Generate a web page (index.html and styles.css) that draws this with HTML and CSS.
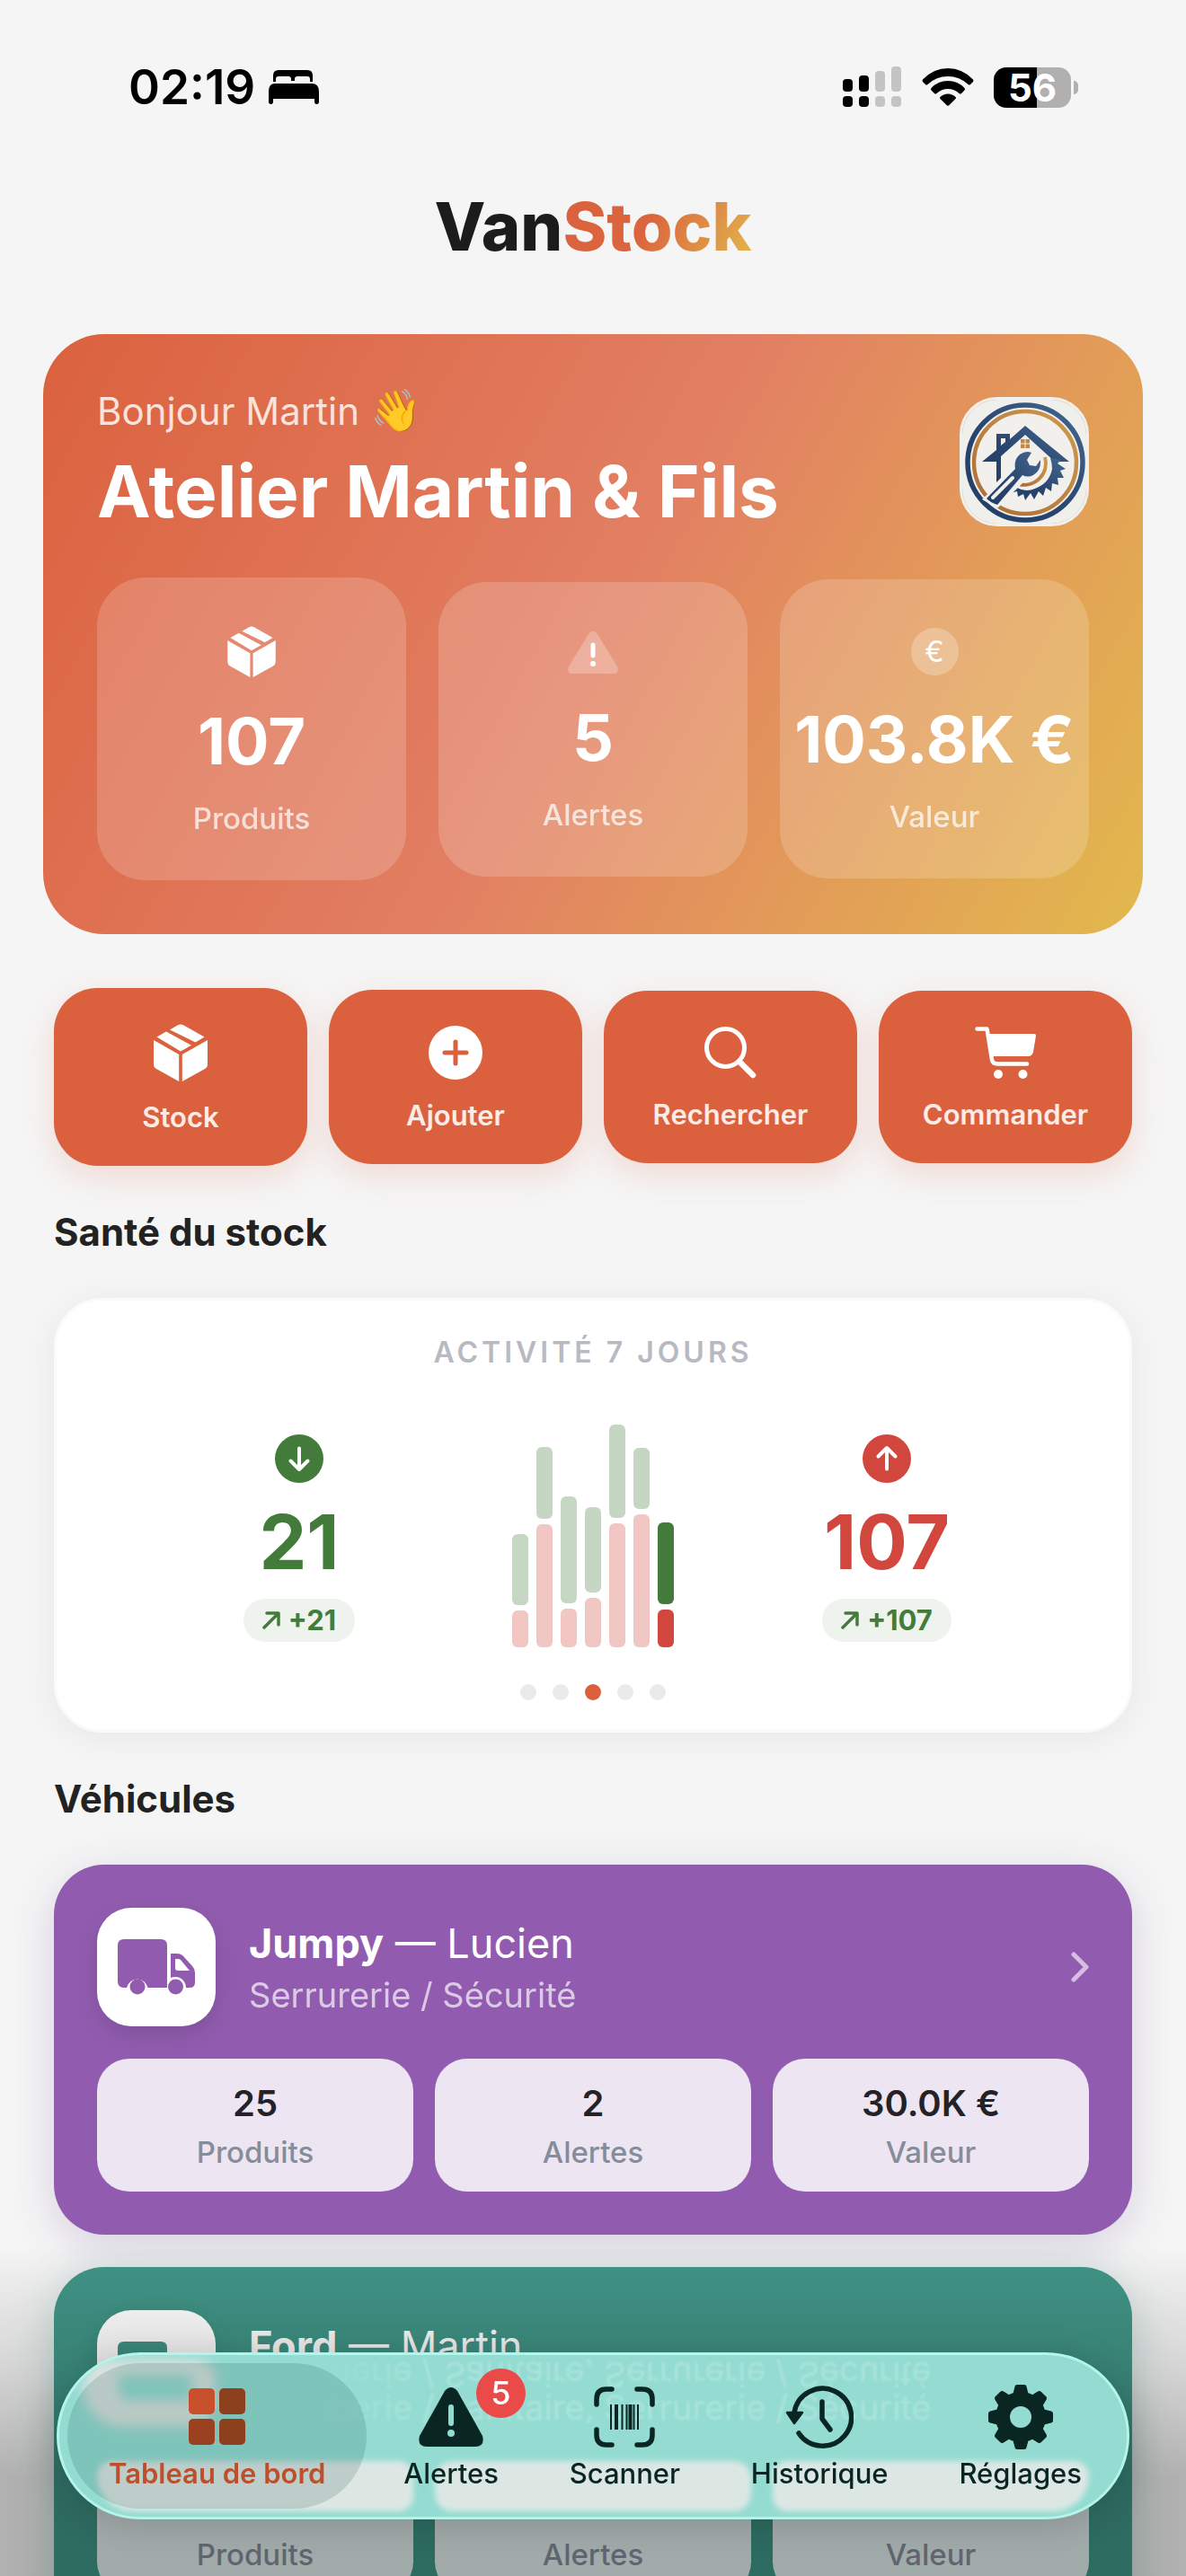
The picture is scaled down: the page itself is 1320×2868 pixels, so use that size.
FILE: index.html
```html
<!DOCTYPE html>
<html lang="fr">
<head>
  <meta charset="UTF-8">
  <meta name="viewport" content="width=device-width, initial-scale=1.0">
  <title>VanStock</title>
  <link rel="stylesheet" href="styles.css">
</head>
<body>
  <!-- Icônes partagées -->
  <svg class="sprite" aria-hidden="true">
    <symbol id="icon-box" viewBox="0 0 60 64">
      <path d="M18 6.500 27 1.300Q30 -.3 33 1.300L56.500 14.500 46.500 20.500Z"/>
      <path d="M3.500 14.500 14 8.600 42 23.800 30 30.600Z"/>
      <path d="M0 18 28.200 34V64L3 50Q0 48.300 0 45Z"/>
      <path d="M60 18 31.800 34V64L57 50Q60 48.300 60 45Z"/>
    </symbol>
    <symbol id="icon-truck" viewBox="0 0 86 62">
      <path d="M7 0H48Q55 0 55 7V54H33.500A12 12 0 0 0 10 54H7Q0 54 0 47V7Q0 0 7 0Z"/>
      <path fill-rule="evenodd" d="M59 16H66Q71 16 74 20L83 30Q86 33 86 37V48Q86 54 80 54H76A12 12 0 0 0 59 43ZM64 22V32Q64 35 67 35H80L70 23Q69 22 67 22Z"/>
      <circle cx="22" cy="53" r="8.500"/>
      <circle cx="64.500" cy="53" r="8.500"/>
    </symbol>
  </svg>

  <!-- Barre d'état -->
  <div class="status-bar">
    <div class="status-left">
      <span>02:19</span>
      <svg width="56" height="38" viewBox="0 0 56 38" aria-hidden="true">
        <path d="M5 13V6Q5 0 11 0H43Q49 0 49 6V13H46V10Q46 7 43 7H32Q29 7 29 10V12H25V10Q25 7 22 7H11Q8 7 8 10V13Z"/>
        <path d="M7 15H48Q56 15 56 24V35Q56 38 53.500 38T51 35V32H5V35Q5 38 2.500 38T0 35V24Q0 15 7 15Z"/>
      </svg>
    </div>
    <div class="status-right">
      <svg width="66" height="46" viewBox="0 0 66 46" aria-hidden="true">
        <rect x="0" y="14" width="11" height="14" rx="4"/>
        <rect x="18" y="10" width="11" height="18" rx="4"/>
        <rect x="0" y="33" width="11" height="12" rx="4"/>
        <rect x="18" y="33" width="11" height="12" rx="4"/>
        <g fill="#c4c4c4">
          <rect x="36" y="5" width="11" height="23" rx="4"/>
          <rect x="54" y="0" width="11" height="28" rx="4"/>
          <rect x="36" y="33" width="11" height="12" rx="4"/>
          <rect x="54" y="33" width="11" height="12" rx="4"/>
        </g>
      </svg>
      <svg width="58" height="42" viewBox="0 0 58 42" aria-hidden="true">
        <path d="M1 12.500Q13 0 29 0T57 12.500Q58 14 57 15L54 18Q53 19 51.500 18Q42 9 29 9T6.500 18Q5 19 4 18L1 15Q0 14 1 12.500Z"/>
        <path d="M10.500 22Q18 14 29 14T47.500 22Q48.500 23.500 47.500 24.500L44 28Q43 29 41.500 28Q36 23 29 23T16.500 28Q15 29 14 28L10.500 24.500Q9.500 23.500 10.500 22Z"/>
        <path d="M20.500 32Q24 28.500 29 28.500T37.500 32Q38.500 33 37.500 34L30.500 41Q29 42.500 27.500 41L20.500 34Q19.500 33 20.500 32Z"/>
      </svg>
      <div class="battery">56</div>
    </div>
  </div>

  <header class="brand">Van<span>Stock</span></header>

  <main class="page">
    <!-- Carte d'accueil -->
    <section class="hero">
      <div class="hero-head">
        <div>
          <p class="hero-hello">Bonjour Martin <span class="wave">👋</span></p>
          <h1>Atelier Martin &amp; Fils</h1>
        </div>
        <svg class="hero-logo" viewBox="3 3 138 138" role="img" aria-label="Logo de l'atelier">
          <defs>
            <linearGradient id="navy" x1="0" y1="1" x2="1" y2="0">
              <stop offset="0" stop-color="#243f66"/>
              <stop offset=".4" stop-color="#27436e"/>
              <stop offset="1" stop-color="#44688f"/>
            </linearGradient>
            <linearGradient id="gold" x1="0" y1="1" x2="1" y2="0">
              <stop offset="0" stop-color="#ab6c38"/>
              <stop offset="1" stop-color="#cf9a4d"/>
            </linearGradient>
          </defs>
          <rect width="144" height="144" fill="#efefeb"/>
          <circle cx="73" cy="73" r="64" fill="#f1f0ec" stroke="url(#navy)" stroke-width="5.500"/>
          <circle cx="73" cy="73" r="57" fill="none" stroke="url(#gold)" stroke-width="4.500"/>
          <path d="M25 72 41 59V41H56V47L73 32 122 72H106L73 42 46 66V90L41 95V72ZM46 46V54L51 50V46Z" fill="url(#navy)" fill-rule="evenodd"/>
          <path d="M68 47H72.500V51.500H68ZM73.500 47H78V51.500H73.500ZM68 52.500H72.500V57H68ZM73.500 52.500H78V57H73.500Z" fill="#c48746"/>
          <path d="M113 70 109 74 118 80 112 82 116 90 109 90 110 98 103 96 102 105 96 101 93 110 88 105 83 114 79 107 73 115 71 108 65 111 64 105 57 107 61 99Q72 107 84 102 100 96 103 80 103 74 101 68Z" fill="url(#navy)"/>
          <path d="M95 67A24 24 0 0 1 66 97" fill="none" stroke="url(#gold)" stroke-width="4"/>
          <path d="M60 80 74 92 42 124 25 114Z" fill="#f1f0ec"/>
          <path d="M80 62 75 70 78 76 85 77 90 70Q91 82 82 87 76 90 70 87L42 120Q35 118 30 113L62 80Q60 70 67 64 74 59 80 62Z" fill="url(#navy)"/>
          <path d="M59 90 37 112" stroke="#f1f0ec" stroke-width="4" stroke-linecap="round"/>
        </svg>
      </div>

      <div class="hero-stats">
        <div class="hero-stat">
          <svg width="54" height="57" fill="#fff" aria-hidden="true"><use href="#icon-box"/></svg>
          <strong>107</strong>
          <span>Produits</span>
        </div>
        <div class="hero-stat">
          <svg width="56" height="48" viewBox="0 0 56 48" aria-hidden="true">
            <path d="M23 4Q28 -3 33 4L55 40Q58 48 50 48H6Q-2 48 1 40Z" fill="#fff" fill-opacity=".25"/>
            <path d="M28 16V28" stroke="#fff" stroke-width="5" stroke-linecap="round"/>
            <circle cx="28" cy="37" r="3" fill="#fff"/>
          </svg>
          <strong>5</strong>
          <span>Alertes</span>
        </div>
        <div class="hero-stat">
          <i class="coin">€</i>
          <strong>103.8K €</strong>
          <span>Valeur</span>
        </div>
      </div>
    </section>

    <!-- Actions rapides -->
    <div class="actions">
      <button type="button" class="action">
        <svg width="60" height="64" fill="#fff" aria-hidden="true"><use href="#icon-box"/></svg>
        Stock
      </button>
      <button type="button" class="action">
        <svg width="60" height="60" viewBox="0 0 60 60" aria-hidden="true">
          <circle cx="30" cy="30" r="30" fill="#fff"/>
          <path d="M30 18V42M18 30H42" stroke="#db613e" stroke-width="5" stroke-linecap="round"/>
        </svg>
        Ajouter
      </button>
      <button type="button" class="action">
        <svg width="58" height="58" viewBox="0 0 58 58" fill="none" stroke="#fff" aria-hidden="true">
          <circle cx="23.500" cy="23.500" r="21" stroke-width="5"/>
          <path d="M39 39 54 54" stroke-width="6.500" stroke-linecap="round"/>
        </svg>
        Rechercher
      </button>
      <button type="button" class="action">
        <svg width="68" height="58" viewBox="0 0 68 58" fill="#fff" aria-hidden="true">
          <path d="M2.500 2.500H13.500L19 37Q20 41.500 25 41.500H58" fill="none" stroke="#fff" stroke-width="4.500" stroke-linecap="round" stroke-linejoin="round"/>
          <path d="M15 8H66Q68 8 68 10L65 28Q64 33 59 33H19Z"/>
          <circle cx="26" cy="53" r="5"/>
          <circle cx="53.500" cy="53" r="5"/>
        </svg>
        Commander
      </button>
    </div>

    <h2>Santé du stock</h2>
    <section class="health">
      <h3>ACTIVITÉ 7 JOURS</h3>
      <div class="health-body">
        <div class="flow flow-in">
          <svg width="54" height="54" viewBox="0 0 54 54" aria-hidden="true">
            <circle cx="27" cy="27" r="27" fill="currentColor"/>
            <path d="M27 15.500V38.500M17.500 29.500 27 39 36.500 29.500" fill="none" stroke="#fff" stroke-width="4" stroke-linecap="round" stroke-linejoin="round"/>
          </svg>
          <strong>21</strong>
          <span class="trend">
            <svg width="20" height="20" viewBox="0 0 20 20" aria-hidden="true"><path d="M2 18 17.500 2.500M5 2H18V15" fill="none" stroke="currentColor" stroke-width="3.500" stroke-linecap="round" stroke-linejoin="round"/></svg>
            +21
          </span>
        </div>

        <div class="chart">
          <div class="day"><i class="in" style="height: 79px"></i><i class="out" style="height: 41px"></i></div>
          <div class="day"><i class="in" style="height: 80px"></i><i class="out" style="height: 137px"></i></div>
          <div class="day"><i class="in" style="height: 119px"></i><i class="out" style="height: 43px"></i></div>
          <div class="day"><i class="in" style="height: 95px"></i><i class="out" style="height: 55px"></i></div>
          <div class="day"><i class="in" style="height: 104px"></i><i class="out" style="height: 138px"></i></div>
          <div class="day"><i class="in" style="height: 68px"></i><i class="out" style="height: 148px"></i></div>
          <div class="day today"><i class="in" style="height: 91px"></i><i class="out" style="height: 42px"></i></div>
        </div>

        <div class="flow flow-out">
          <svg width="54" height="54" viewBox="0 0 54 54" aria-hidden="true">
            <circle cx="27" cy="27" r="27" fill="currentColor"/>
            <path d="M27 38.500V15.500M17.500 24.500 27 15 36.500 24.500" fill="none" stroke="#fff" stroke-width="4" stroke-linecap="round" stroke-linejoin="round"/>
          </svg>
          <strong>107</strong>
          <span class="trend">
            <svg width="20" height="20" viewBox="0 0 20 20" aria-hidden="true"><path d="M2 18 17.500 2.500M5 2H18V15" fill="none" stroke="currentColor" stroke-width="3.500" stroke-linecap="round" stroke-linejoin="round"/></svg>
            +107
          </span>
        </div>
      </div>
      <div class="dots">
        <button type="button" aria-label="Page 1"></button>
        <button type="button" aria-label="Page 2"></button>
        <button type="button" aria-label="Page 3" class="active"></button>
        <button type="button" aria-label="Page 4"></button>
        <button type="button" aria-label="Page 5"></button>
      </div>
    </section>

    <h2>Véhicules</h2>
    <div class="vehicles">
      <a href="#jumpy" class="vehicle vehicle-purple">
        <div class="vehicle-head">
          <div class="vehicle-icon"><svg width="86" height="62" aria-hidden="true"><use href="#icon-truck"/></svg></div>
          <div class="vehicle-text">
            <p class="vehicle-name"><b>Jumpy</b> — Lucien</p>
            <p class="vehicle-trade">Serrurerie / Sécurité</p>
          </div>
          <svg class="chevron" width="20" height="34" viewBox="0 0 20 34" aria-hidden="true"><path d="M3 3 17 17 3 31" fill="none" stroke="currentColor" stroke-width="5" stroke-linecap="round" stroke-linejoin="round"/></svg>
        </div>
        <div class="vehicle-stats">
          <div><strong>25</strong><span>Produits</span></div>
          <div><strong>2</strong><span>Alertes</span></div>
          <div><strong>30.0K €</strong><span>Valeur</span></div>
        </div>
      </a>

      <a href="#ford" class="vehicle vehicle-green">
        <div class="vehicle-head">
          <div class="vehicle-icon"><svg width="86" height="62" aria-hidden="true"><use href="#icon-truck"/></svg></div>
          <div class="vehicle-text">
            <p class="vehicle-name"><b>Ford</b> — Martin</p>
            <p class="vehicle-trade">&nbsp;</p>
          </div>
        </div>
        <div class="vehicle-stats">
          <div><strong>&nbsp;</strong><span>Produits</span></div>
          <div><strong>&nbsp;</strong><span>Alertes</span></div>
          <div><strong>&nbsp;</strong><span>Valeur</span></div>
        </div>
      </a>
    </div>
  </main>

  <div class="bottom-fade"></div>

  <!-- Barre d'onglets -->
  <nav class="tab-bar">
    <div class="glass" aria-hidden="true">
      <div class="glass-icon"></div>
      <p class="glass-text glass-mirror">Plomberie / Sanitaire, Serrurerie / Sécurité</p>
      <p class="glass-text">Plomberie / Sanitaire, Serrurerie / Sécurité</p>
      <div class="glass-tiles"><i></i><i></i><i></i></div>
    </div>

    <a href="#dashboard" class="tab active">
      <span class="tab-icon">
        <svg width="64" height="64" viewBox="0 0 64 64" aria-hidden="true">
          <rect width="29" height="29" rx="5" fill="#c8502d"/>
          <rect x="34" width="29" height="29" rx="5" fill="#8c401e"/>
          <rect y="34" width="29" height="29" rx="5" fill="#9a4220"/>
          <rect x="34" y="34" width="29" height="29" rx="5" fill="#8c401e"/>
        </svg>
      </span>
      Tableau de bord
    </a>
    <a href="#alerts" class="tab">
      <span class="tab-icon">
        <svg width="72" height="66" viewBox="0 0 72 66" aria-hidden="true">
          <path d="M29 4Q36 -4 43 4L71 54Q74 66 63 66H9Q-2 66 1 54Z" fill="currentColor"/>
          <path d="M36 22V40" stroke="#93dbd1" stroke-width="6" stroke-linecap="round"/>
          <circle cx="36" cy="51" r="4" fill="#93dbd1"/>
        </svg>
        <em class="badge">5</em>
      </span>
      Alertes
    </a>
    <a href="#scanner" class="tab">
      <span class="tab-icon">
        <svg width="68" height="68" viewBox="0 0 68 68" fill="none" stroke="currentColor" aria-hidden="true">
          <path d="M3 20V14Q3 3 14 3H20M48 3H54Q65 3 65 14V20M65 48V54Q65 65 54 65H48M20 65H14Q3 65 3 54V48" stroke-width="5.500" stroke-linecap="round"/>
          <path d="M19 20V48M31.500 20V48M36.500 20V48M44.500 20V48M49 20V48" stroke-width="2"/>
          <path d="M25 20V48M40.500 20V48" stroke-width="4"/>
        </svg>
      </span>
      Scanner
    </a>
    <a href="#history" class="tab">
      <span class="tab-icon">
        <svg width="76" height="70" viewBox="0 0 76 70" fill="none" stroke="currentColor" stroke-width="5.500" stroke-linecap="round" stroke-linejoin="round" aria-hidden="true">
          <path d="M10 30A32 32 0 1 1 15 53"/>
          <path d="M41 18V37L50 49"/>
          <path d="M2 30H19L10 42Z" fill="currentColor" stroke-width="2.500"/>
        </svg>
      </span>
      Historique
    </a>
    <a href="#settings" class="tab">
      <span class="tab-icon">
        <svg width="72" height="72" viewBox="-36 -36 72 72" fill="currentColor" aria-hidden="true">
          <circle r="20" fill="none" stroke="currentColor" stroke-width="16"/>
          <g id="teeth">
            <path d="M-9 -24 -6.500 -34Q-6 -36 -4 -36H4Q6 -36 6.500 -34L9 -24Z"/>
            <path d="M-9 24 -6.500 34Q-6 36 -4 36H4Q6 36 6.500 34L9 24Z"/>
          </g>
          <use href="#teeth" transform="rotate(45)"/>
          <use href="#teeth" transform="rotate(90)"/>
          <use href="#teeth" transform="rotate(135)"/>
        </svg>
      </span>
      Réglages
    </a>
  </nav>
</body>
</html>
```

FILE: styles.css
```css
* {
  box-sizing: border-box;
}

body {
  margin: 0;
  height: 100vh;
  overflow: hidden;
  background: #f5f5f5;
  color: #222;
  font-family: Inter, 'Liberation Sans', sans-serif;
}

h1, h2, h3, p {
  margin: 0;
}

a {
  color: inherit;
  text-decoration: none;
}

button {
  border: none;
  padding: 0;
  font-family: inherit;
  cursor: pointer;
}

svg {
  display: block;
}

.sprite {
  position: absolute;
  width: 0;
  height: 0;
}

/* Barre d'état */
.status-bar {
  display: flex;
  justify-content: space-between;
  align-items: center;
  padding: 64px 120px 0 143px;
  height: 130px;
  color: #000;
}

.status-left,
.status-right {
  display: flex;
  align-items: center;
}

.status-left {
  gap: 15px;
  font-size: 53px;
  font-weight: 600;
}

.status-right {
  gap: 22px;
}

.battery {
  position: relative;
  width: 86px;
  height: 45px;
  margin-right: 8px;
  border-radius: 14px;
  background: linear-gradient(90deg, #000 56%, #b0b0b0 56%);
  color: #fff;
  font-size: 42px;
  font-weight: 700;
  line-height: 45px;
  text-align: center;
}

.battery::after {
  content: '';
  position: absolute;
  top: 15px;
  right: -8px;
  width: 5px;
  height: 15px;
  border-radius: 0 5px 5px 0;
  background: #b0b0b0;
}

.brand {
  padding: 80px 0 78px;
  color: #1c1c1c;
  font-size: 74px;
  font-weight: 800;
  line-height: 84px;
  text-align: center;
}

.brand span {
  background: linear-gradient(119deg, #db613e, #db653e 45%, #e2b94d);
  -webkit-background-clip: text;
  background-clip: text;
  color: transparent;
}

.page {
  padding: 0 60px;
}

/* Carte d'accueil */
.hero {
  margin: 0 -12px 60px;
  padding: 60px;
  border-radius: 68px;
  background: linear-gradient(119deg, #db613e, #e27f63 50%, #e2b94d);
  color: #fff;
}

.hero-head {
  display: flex;
  justify-content: space-between;
  align-items: center;
  height: 164px;
  margin-bottom: 47px;
}

.hero-hello {
  margin-bottom: 16px;
  color: #fbe2da;
  font-size: 42px;
  line-height: 50px;
}

.wave {
  font-size: 46px;
  line-height: 1;
}

.hero h1 {
  font-size: 80px;
  font-weight: 700;
  line-height: 96px;
}

.hero-logo {
  width: 144px;
  height: 144px;
  border: 3px solid #f0f0ee;
  border-radius: 42px;
}

.hero-stats {
  display: grid;
  grid-template-columns: repeat(3, 1fr);
  gap: 36px;
  align-items: center;
}

.hero-stat {
  display: flex;
  flex-direction: column;
  align-items: center;
  padding: 54px 0 48px;
  border-radius: 54px;
  background: rgba(255, 255, 255, 0.18);
}

.hero-stat strong {
  margin: 29px 0 23px;
  font-size: 72px;
  font-weight: 700;
  line-height: 84px;
  white-space: nowrap;
}

.hero-stat span {
  opacity: 0.72;
  font-size: 33px;
  font-weight: 500;
  line-height: 42px;
}

.coin {
  width: 53px;
  height: 53px;
  border-radius: 50%;
  background: rgba(255, 255, 255, 0.25);
  font-size: 32px;
  font-style: normal;
  line-height: 53px;
  text-align: center;
}

/* Actions rapides */
.actions {
  display: grid;
  grid-template-columns: repeat(4, 1fr);
  gap: 24px;
  align-items: center;
  margin-bottom: 48px;
}

.action {
  display: flex;
  flex-direction: column;
  align-items: center;
  gap: 22px;
  padding: 40px 0 36px;
  border-radius: 48px;
  background: #db613e;
  box-shadow: 0 12px 36px rgba(219, 97, 62, 0.18);
  color: #fdebe5;
  font-size: 31px;
  font-weight: 600;
  line-height: 36px;
}

h2 {
  margin-bottom: 48px;
  font-size: 42px;
  font-weight: 700;
  line-height: 51px;
}

/* Santé du stock */
.health {
  margin-bottom: 48px;
  padding: 38px 57px 33px;
  border: 3px solid #fafafa;
  border-radius: 54px;
  background: #fff;
  box-shadow: 0 6px 42px rgba(0, 0, 0, 0.06);
}

.health h3 {
  margin-bottom: 60px;
  color: #b8bac3;
  font-size: 32px;
  font-weight: 600;
  letter-spacing: 4px;
  line-height: 40px;
  text-align: center;
}

.health-body {
  display: grid;
  grid-template-columns: 1fr auto 1fr;
  gap: 24px;
  align-items: end;
}

.flow {
  display: flex;
  flex-direction: column;
  align-items: center;
  padding-bottom: 6px;
}

.flow-in {
  color: #437b3b;
}

.flow-out {
  color: #d2473d;
}

.flow strong {
  margin: 18px 0 15px;
  font-size: 84px;
  font-weight: 700;
  line-height: 96px;
}

.trend {
  display: flex;
  align-items: center;
  gap: 9px;
  padding: 0 21px;
  border-radius: 24px;
  background: #eff3ee;
  color: #437b3b;
  font-size: 31px;
  font-weight: 700;
  line-height: 48px;
}

.chart {
  display: flex;
  align-items: flex-end;
  gap: 9px;
  height: 248px;
}

.day {
  display: flex;
  flex-direction: column;
  gap: 6px;
  width: 18px;
  opacity: 0.3;
}

.day.today {
  opacity: 1;
}

.day i {
  border-radius: 6px;
}

.day .in {
  background: #437b3b;
}

.day .out {
  background: #d2473d;
}

.dots {
  display: flex;
  justify-content: center;
  gap: 18px;
  margin-top: 41px;
}

.dots button {
  width: 18px;
  height: 18px;
  border-radius: 50%;
  background: #eaeaea;
}

.dots .active {
  background: #db613e;
}

/* Véhicules */
.vehicles {
  display: flex;
  flex-direction: column;
  gap: 36px;
}

.vehicle {
  padding: 48px;
  border-radius: 56px;
  color: #fff;
}

.vehicle-purple {
  background: #915caf;
  box-shadow: 0 12px 48px rgba(110, 80, 150, 0.22);
}

.vehicle-green {
  background: #419587;
  box-shadow: 0 12px 48px rgba(50, 130, 115, 0.3);
}

.vehicle-head {
  display: flex;
  align-items: center;
  gap: 37px;
  margin-bottom: 36px;
}

.vehicle-icon {
  display: flex;
  justify-content: center;
  align-items: center;
  width: 132px;
  height: 132px;
  border-radius: 38px;
  background: #fff;
  box-shadow: 0 9px 24px rgba(0, 0, 0, 0.12);
}

.vehicle-purple .vehicle-icon {
  fill: #915caf;
}

.vehicle-green .vehicle-icon {
  fill: #419587;
}

.vehicle-text {
  flex: 1;
}

.vehicle-name {
  font-size: 45px;
  line-height: 56px;
}

.vehicle-name b {
  font-weight: 700;
}

.vehicle-trade {
  margin-top: 6px;
  opacity: 0.68;
  font-size: 38px;
  line-height: 46px;
}

.chevron {
  color: #d6bde5;
}

.vehicle-stats {
  display: grid;
  grid-template-columns: repeat(3, 1fr);
  gap: 24px;
}

.vehicle-stats div {
  display: flex;
  flex-direction: column;
  gap: 10px;
  padding: 26px 0 24px;
  border-radius: 36px;
  background: rgba(255, 255, 255, 0.84);
  text-align: center;
}

.vehicle-stats strong {
  color: #242226;
  font-size: 40px;
  font-weight: 600;
  line-height: 48px;
}

.vehicle-stats span {
  color: #858d9b;
  font-size: 33px;
  font-weight: 500;
  line-height: 40px;
}

/* Ombre sous la barre d'onglets */
.bottom-fade {
  position: fixed;
  right: 0;
  bottom: 0;
  left: 0;
  height: 368px;
  background: linear-gradient(rgba(0, 0, 0, 0), rgba(0, 0, 0, 0.12) 35%, rgba(0, 0, 0, 0.28) 70%, rgba(0, 0, 0, 0.28));
}

/* Barre d'onglets */
.tab-bar {
  position: fixed;
  right: 63px;
  bottom: 63px;
  left: 63px;
  display: flex;
  justify-content: space-between;
  padding: 9px 12px 9px 9px;
  border: 3px solid #b4f5eb;
  border-radius: 93px;
  background: #94dcd2;
  box-shadow: 0 6px 42px rgba(0, 0, 0, 0.16);
}

.glass {
  position: absolute;
  inset: 0;
  overflow: hidden;
  border-radius: 90px;
}

.glass-icon {
  position: absolute;
  top: 4px;
  left: 26px;
  width: 148px;
  height: 76px;
  border: solid #d9e2df;
  border-width: 18px 26px 30px 40px;
  border-radius: 40px 30px 40px 60px;
  filter: blur(7px);
}

.glass-text {
  position: absolute;
  top: 40px;
  left: 212px;
  opacity: 0.2;
  color: #fff;
  filter: blur(1px);
  font-size: 38px;
  line-height: 36px;
  white-space: nowrap;
  -webkit-mask-image: linear-gradient(90deg, transparent 80px, #000 200px);
  mask-image: linear-gradient(90deg, transparent 80px, #000 200px);
}

.glass-mirror {
  top: 4px;
  transform: rotateX(180deg);
}

.glass-tiles {
  position: absolute;
  top: 118px;
  right: 42px;
  left: 42px;
  display: flex;
  gap: 24px;
  height: 56px;
  filter: blur(3px);
}

.glass-tiles i {
  flex: 1;
  border-radius: 20px;
  background: #dce7e4;
}

.glass-tiles i:first-child {
  border-bottom-left-radius: 50px;
}

.glass-tiles i:last-child {
  border-bottom-right-radius: 50px;
}

.tab {
  position: relative;
  display: flex;
  flex-direction: column;
  align-items: center;
  gap: 9px;
  padding: 24px 38px 21px;
  border-radius: 81px;
  color: #0a2622;
  font-size: 31px;
  font-weight: 500;
  line-height: 36px;
  white-space: nowrap;
}

.tab.active {
  padding: 24px 46px 21px;
  background: rgba(0, 50, 45, 0.14);
  color: #bd4f2c;
  font-weight: 600;
}

.tab-icon {
  position: relative;
  display: flex;
  justify-content: center;
  align-items: center;
  height: 72px;
}

.badge {
  position: absolute;
  top: -18px;
  right: -47px;
  width: 55px;
  height: 55px;
  border-radius: 50%;
  background: #ea4b48;
  color: #fff;
  font-size: 36px;
  font-style: normal;
  line-height: 55px;
  text-align: center;
}
```
